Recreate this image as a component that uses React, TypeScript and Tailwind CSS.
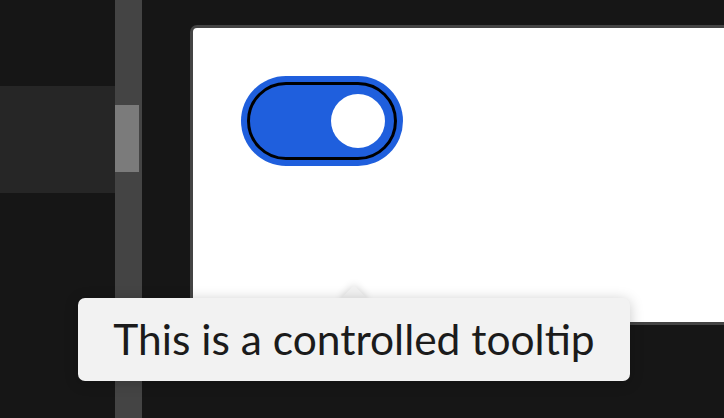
export default function App() {
  return (
    <div className="relative flex h-[418px] w-[724px] overflow-hidden bg-[#161616] font-['Lato',sans-serif]">
      {/* side list */}
      <div className="flex w-[115px] shrink-0 flex-col pt-[86px]">
        <div className="h-[107px] bg-[#262626]" />
      </div>
      {/* scrollbar */}
      <div className="flex w-[27px] shrink-0 flex-col bg-[#444444] pt-[105px]">
        <div className="h-[67px] w-[24px] bg-[#7b7b7b]" />
      </div>
      {/* content */}
      <div className="shrink-0 pl-[48px] pt-[25px]">
        <div className="h-[300px] w-[600px] rounded-tl-[7px] border-[3px] border-[#444444] bg-white pl-[54px] pt-[54px]">
          <button
            type="button"
            role="switch"
            aria-checked="true"
            className="flex h-[78px] w-[150px] items-center justify-end rounded-full border-[3px] border-black bg-[#1f5fdd] pr-[9px] shadow-[0_0_0_6px_#1f5fdd]"
          >
            <span className="h-[54px] w-[54px] rounded-full bg-white" />
          </button>
        </div>
      </div>

      {/* tooltip */}
      <div className="absolute left-[78px] top-[298px] w-[552px]">
        <div className="absolute left-[267px] top-[-9px] h-[18px] w-[18px] rotate-45 bg-[#f2f2f2] shadow-[0_0_8px_rgba(0,0,0,0.18)]" />
        <div className="relative flex h-[83px] items-center justify-center rounded-[7px] bg-[#f2f2f2] pb-[1px] text-[42.5px] leading-none text-[#1b1b1b] shadow-[0_2px_14px_rgba(0,0,0,0.22)]">
          This is a controlled tooltip
        </div>
      </div>
    </div>
  );
}
